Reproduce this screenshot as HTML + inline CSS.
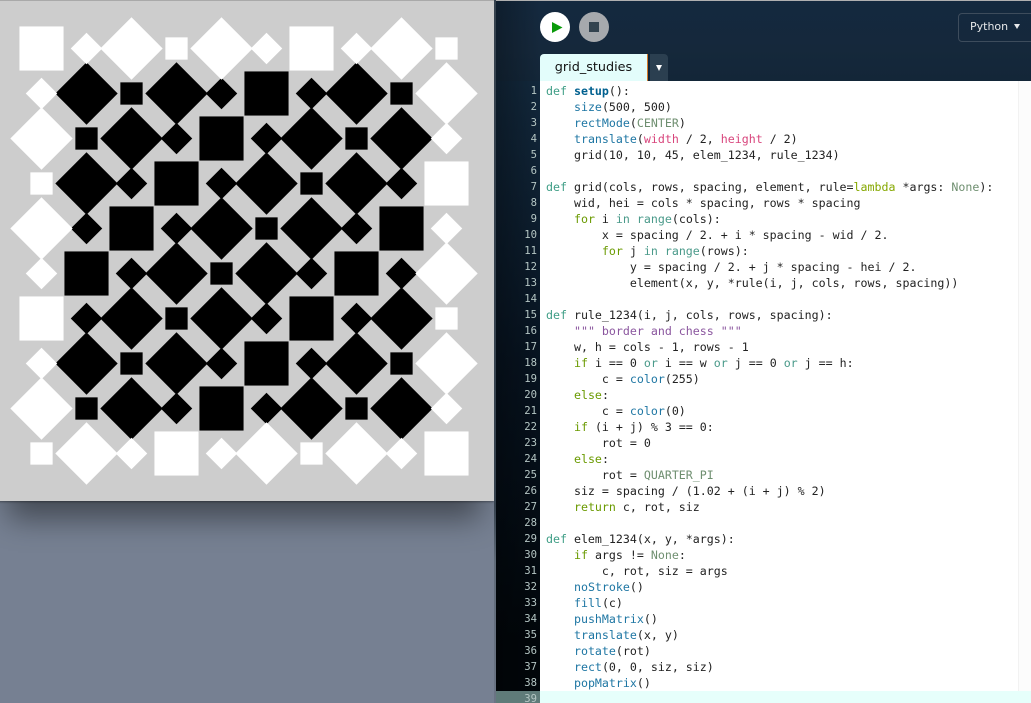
<!DOCTYPE html>
<html><head><meta charset="utf-8"><style>
html,body{margin:0;padding:0;width:1031px;height:703px;overflow:hidden;background:#768092}
body{position:relative;font-family:"Liberation Sans",sans-serif}
#bg{position:absolute;left:0;top:0;width:496px;height:703px;background:#768092}
#cv{position:absolute;left:-6px;top:1px;width:500px;height:500px;background:#cdcdcd;box-shadow:0 32px 28px -14px rgba(0,0,0,.42),0 1px 2px rgba(0,0,0,.35)}
#topl{position:absolute;left:0;top:0;width:496px;height:1px;background:#a9a9a9}
#strip{position:absolute;left:494px;top:0;width:2px;height:703px;background:linear-gradient(180deg,#36424e 0,#36424e 72%,#5f6a78 80%,#6a7484 100%)}
#head{position:absolute;left:496px;top:0;width:535px;height:81px;background:linear-gradient(90deg,rgba(0,0,0,.28),rgba(0,0,0,0) 44px),linear-gradient(180deg,#14293f,#15283b 60%,#132638);border-top:1px solid #b0b0b0;box-sizing:border-box}
#gut{position:absolute;left:496px;top:81px;width:44px;height:622px;background:linear-gradient(90deg,rgba(0,0,0,.3),rgba(0,0,0,0)),linear-gradient(180deg,#12283c,#071320 45%,#01060a 90%)}
#edit{position:absolute;left:540px;top:81px;width:491px;height:622px;background:#fff}
#mini{position:absolute;left:1018px;top:81px;width:13px;height:622px;background:#fcfcfc;border-left:1px solid #f2f2f2;box-sizing:border-box}
#act{position:absolute;left:540px;top:691px;width:491px;height:12px;background:#e6fffb}
#actg{position:absolute;left:496px;top:691px;width:44px;height:12px;background:#5f7b79}
#play{position:absolute;left:540px;top:12px;width:30px;height:30px;border-radius:50%;background:#fff}
#stop{position:absolute;left:579px;top:12px;width:30px;height:30px;border-radius:50%;background:#a6a9ad}
#stop i{position:absolute;left:10px;top:10px;width:10px;height:10px;background:#33434f}
#tab{position:absolute;left:540px;top:54px;width:107px;height:27px;background:#e3fdfb;border-right:1px solid #d47a2a;border-radius:4px 0 0 0;color:#111;line-height:27px;text-align:center;font-family:"DejaVu Sans",sans-serif;font-size:12.8px}
#drop{position:absolute;left:650px;top:54px;width:18px;height:27px;background:#2b3f50;border-radius:0 4px 0 0}
#drop i{position:absolute;left:6px;top:11px;width:0;height:0;border-left:3px solid transparent;border-right:3px solid transparent;border-top:6px solid #fff}
#lang{position:absolute;left:958px;top:13px;width:90px;height:29px;border:1px solid #3d4c5c;border-radius:4px;box-sizing:border-box;color:#e6e8ea;font-family:"DejaVu Sans",sans-serif;font-size:11px;line-height:26px;padding-left:11px}
#lang i{position:absolute;left:55px;top:10px;width:0;height:0;border-left:3px solid transparent;border-right:3px solid transparent;border-top:5px solid #e6e8ea}
pre{position:absolute;margin:0;font-family:"DejaVu Sans Mono",monospace;line-height:16px}
#nums{left:496px;top:83px;width:41px;text-align:right;font-size:10.6px;color:#b5c6c4}
#code{left:546px;top:83px;font-size:11.62px;color:#222}
.k{color:#3d9d85}.f{color:#6a9a00}.o{color:#4a9a8a}.b{color:#1e76a3}.t{color:#00608f;font-weight:bold}.c{color:#6f8f70}.p{color:#d8457c}.s{color:#8a559e}.l{color:#86a800}
</style></head><body>
<div id="bg"></div>
<div id="cv"></div>
<div id="topl"></div>
<div id="strip"></div>
<svg width="496" height="502" style="position:absolute;left:0;top:0">
<defs>
<rect id="S" x="-22.06" y="-22.06" width="44.12" height="44.12"/>
<rect id="s" x="-11.14" y="-11.14" width="22.28" height="22.28"/>
<rect id="D" x="-22.06" y="-22.06" width="44.12" height="44.12" transform="rotate(45)"/>
<rect id="d" x="-11.14" y="-11.14" width="22.28" height="22.28" transform="rotate(45)"/>
</defs>
<g fill="#000">
<use href="#D" x="86.5" y="93.5"/><use href="#s" x="131.5" y="93.5"/><use href="#D" x="176.5" y="93.5"/><use href="#d" x="221.5" y="93.5"/><use href="#S" x="266.5" y="93.5"/><use href="#d" x="311.5" y="93.5"/><use href="#D" x="356.5" y="93.5"/><use href="#s" x="401.5" y="93.5"/>
<use href="#s" x="86.5" y="138.5"/><use href="#D" x="131.5" y="138.5"/><use href="#d" x="176.5" y="138.5"/><use href="#S" x="221.5" y="138.5"/><use href="#d" x="266.5" y="138.5"/><use href="#D" x="311.5" y="138.5"/><use href="#s" x="356.5" y="138.5"/><use href="#D" x="401.5" y="138.5"/>
<use href="#D" x="86.5" y="183.5"/><use href="#d" x="131.5" y="183.5"/><use href="#S" x="176.5" y="183.5"/><use href="#d" x="221.5" y="183.5"/><use href="#D" x="266.5" y="183.5"/><use href="#s" x="311.5" y="183.5"/><use href="#D" x="356.5" y="183.5"/><use href="#d" x="401.5" y="183.5"/>
<use href="#d" x="86.5" y="228.5"/><use href="#S" x="131.5" y="228.5"/><use href="#d" x="176.5" y="228.5"/><use href="#D" x="221.5" y="228.5"/><use href="#s" x="266.5" y="228.5"/><use href="#D" x="311.5" y="228.5"/><use href="#d" x="356.5" y="228.5"/><use href="#S" x="401.5" y="228.5"/>
<use href="#S" x="86.5" y="273.5"/><use href="#d" x="131.5" y="273.5"/><use href="#D" x="176.5" y="273.5"/><use href="#s" x="221.5" y="273.5"/><use href="#D" x="266.5" y="273.5"/><use href="#d" x="311.5" y="273.5"/><use href="#S" x="356.5" y="273.5"/><use href="#d" x="401.5" y="273.5"/>
<use href="#d" x="86.5" y="318.5"/><use href="#D" x="131.5" y="318.5"/><use href="#s" x="176.5" y="318.5"/><use href="#D" x="221.5" y="318.5"/><use href="#d" x="266.5" y="318.5"/><use href="#S" x="311.5" y="318.5"/><use href="#d" x="356.5" y="318.5"/><use href="#D" x="401.5" y="318.5"/>
<use href="#D" x="86.5" y="363.5"/><use href="#s" x="131.5" y="363.5"/><use href="#D" x="176.5" y="363.5"/><use href="#d" x="221.5" y="363.5"/><use href="#S" x="266.5" y="363.5"/><use href="#d" x="311.5" y="363.5"/><use href="#D" x="356.5" y="363.5"/><use href="#s" x="401.5" y="363.5"/>
<use href="#s" x="86.5" y="408.5"/><use href="#D" x="131.5" y="408.5"/><use href="#d" x="176.5" y="408.5"/><use href="#S" x="221.5" y="408.5"/><use href="#d" x="266.5" y="408.5"/><use href="#D" x="311.5" y="408.5"/><use href="#s" x="356.5" y="408.5"/><use href="#D" x="401.5" y="408.5"/>
</g>
<g fill="#fff">
<use href="#S" x="41.5" y="48.5"/><use href="#d" x="86.5" y="48.5"/><use href="#D" x="131.5" y="48.5"/><use href="#s" x="176.5" y="48.5"/><use href="#D" x="221.5" y="48.5"/><use href="#d" x="266.5" y="48.5"/><use href="#S" x="311.5" y="48.5"/><use href="#d" x="356.5" y="48.5"/><use href="#D" x="401.5" y="48.5"/><use href="#s" x="446.5" y="48.5"/>
<use href="#s" x="41.5" y="453.5"/><use href="#D" x="86.5" y="453.5"/><use href="#d" x="131.5" y="453.5"/><use href="#S" x="176.5" y="453.5"/><use href="#d" x="221.5" y="453.5"/><use href="#D" x="266.5" y="453.5"/><use href="#s" x="311.5" y="453.5"/><use href="#D" x="356.5" y="453.5"/><use href="#d" x="401.5" y="453.5"/><use href="#S" x="446.5" y="453.5"/>
<use href="#d" x="41.5" y="93.5"/><use href="#D" x="41.5" y="138.5"/><use href="#s" x="41.5" y="183.5"/><use href="#D" x="41.5" y="228.5"/><use href="#d" x="41.5" y="273.5"/><use href="#S" x="41.5" y="318.5"/><use href="#d" x="41.5" y="363.5"/><use href="#D" x="41.5" y="408.5"/>
<use href="#D" x="446.5" y="93.5"/><use href="#d" x="446.5" y="138.5"/><use href="#S" x="446.5" y="183.5"/><use href="#d" x="446.5" y="228.5"/><use href="#D" x="446.5" y="273.5"/><use href="#s" x="446.5" y="318.5"/><use href="#D" x="446.5" y="363.5"/><use href="#d" x="446.5" y="408.5"/>
</g>
</svg>
<div id="head"></div>
<div id="gut"></div>
<div id="edit"></div>
<div id="mini"></div>
<div id="act"></div>
<div id="actg"></div>
<div id="play"><svg width="30" height="30" style="position:absolute;left:0;top:0"><path d="M12 10L22.5 15.5L12 21Z" fill="#0a9a0a"/></svg></div>
<div id="stop"><i></i></div>
<div id="tab">grid_studies</div>
<div id="drop"><i></i></div>
<div id="lang">Python<i></i></div>
<pre id="nums">1
2
3
4
5
6
7
8
9
10
11
12
13
14
15
16
17
18
19
20
21
22
23
24
25
26
27
28
29
30
31
32
33
34
35
36
37
38
39</pre>
<pre id="code"><span class="k">def</span> <span class="t">setup</span>():
    <span class="b">size</span>(500, 500)
    <span class="b">rectMode</span>(<span class="c">CENTER</span>)
    <span class="b">translate</span>(<span class="p">width</span> / 2, <span class="p">height</span> / 2)
    grid(10, 10, 45, elem_1234, rule_1234)

<span class="k">def</span> grid(cols, rows, spacing, element, rule=<span class="l">lambda</span> *args: <span class="c">None</span>):
    wid, hei = cols * spacing, rows * spacing
    <span class="f">for</span> i <span class="o">in</span> <span class="o">range</span>(cols):
        x = spacing / 2. + i * spacing - wid / 2.
        <span class="f">for</span> j <span class="o">in</span> <span class="o">range</span>(rows):
            y = spacing / 2. + j * spacing - hei / 2.
            element(x, y, *rule(i, j, cols, rows, spacing))

<span class="k">def</span> rule_1234(i, j, cols, rows, spacing):
    <span class="s">""" border and chess """</span>
    w, h = cols - 1, rows - 1
    <span class="f">if</span> i == 0 <span class="o">or</span> i == w <span class="o">or</span> j == 0 <span class="o">or</span> j == h:
        c = <span class="b">color</span>(255)
    <span class="f">else</span>:
        c = <span class="b">color</span>(0)
    <span class="f">if</span> (i + j) % 3 == 0:
        rot = 0
    <span class="f">else</span>:
        rot = <span class="c">QUARTER_PI</span>
    siz = spacing / (1.02 + (i + j) % 2)
    <span class="f">return</span> c, rot, siz

<span class="k">def</span> elem_1234(x, y, *args):
    <span class="f">if</span> args != <span class="c">None</span>:
        c, rot, siz = args
    <span class="b">noStroke</span>()
    <span class="b">fill</span>(c)
    <span class="b">pushMatrix</span>()
    <span class="b">translate</span>(x, y)
    <span class="b">rotate</span>(rot)
    <span class="b">rect</span>(0, 0, siz, siz)
    <span class="b">popMatrix</span>()</pre>
</body></html>
